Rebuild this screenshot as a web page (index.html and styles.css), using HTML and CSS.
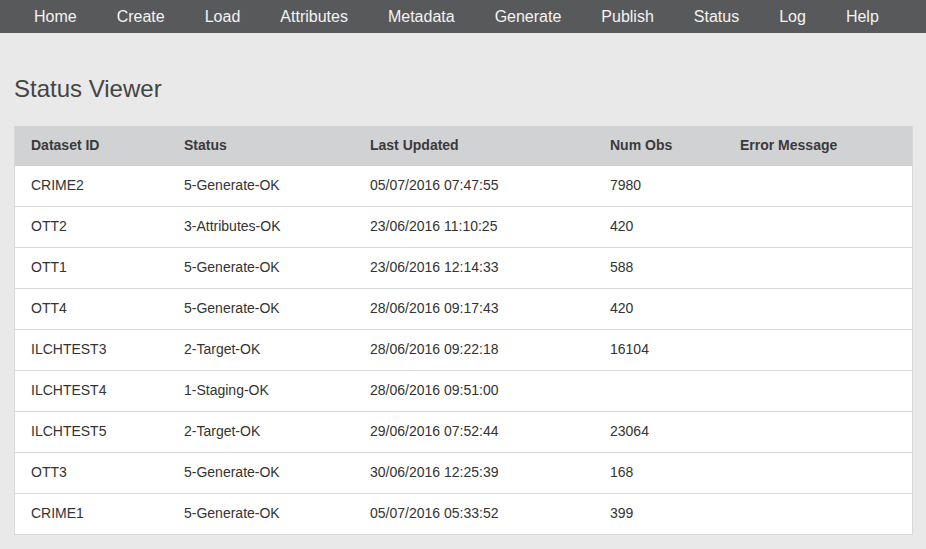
FILE: index.html
```html
<!DOCTYPE html>
<html lang="en">
<head>
    <meta charset="UTF-8">
    <title>Status Viewer</title>
    <link rel="stylesheet" href="styles.css">
</head>
<body>
    <header>
        <nav>
            <ul>
                <li><a href="#">Home</a></li>
                <li><a href="#">Create</a></li>
                <li><a href="#">Load</a></li>
                <li><a href="#">Attributes</a></li>
                <li><a href="#">Metadata</a></li>
                <li><a href="#">Generate</a></li>
                <li><a href="#">Publish</a></li>
                <li><a href="#">Status</a></li>
                <li><a href="#">Log</a></li>
                <li><a href="#">Help</a></li>
            </ul>
        </nav>
    </header>
    <section class="content">
        <h2>Status Viewer</h2>
        <table class="status-table">
            <thead>
                <tr>
                    <th class="col-id">Dataset ID</th>
                    <th class="col-status">Status</th>
                    <th class="col-date">Last Updated</th>
                    <th class="col-obs">Num Obs</th>
                    <th>Error Message</th>
                </tr>
            </thead>
            <tbody>
                <tr><td>CRIME2</td><td>5-Generate-OK</td><td>05/07/2016 07:47:55</td><td>7980</td><td></td></tr>
                <tr><td>OTT2</td><td>3-Attributes-OK</td><td>23/06/2016 11:10:25</td><td>420</td><td></td></tr>
                <tr><td>OTT1</td><td>5-Generate-OK</td><td>23/06/2016 12:14:33</td><td>588</td><td></td></tr>
                <tr><td>OTT4</td><td>5-Generate-OK</td><td>28/06/2016 09:17:43</td><td>420</td><td></td></tr>
                <tr><td>ILCHTEST3</td><td>2-Target-OK</td><td>28/06/2016 09:22:18</td><td>16104</td><td></td></tr>
                <tr><td>ILCHTEST4</td><td>1-Staging-OK</td><td>28/06/2016 09:51:00</td><td></td><td></td></tr>
                <tr><td>ILCHTEST5</td><td>2-Target-OK</td><td>29/06/2016 07:52:44</td><td>23064</td><td></td></tr>
                <tr><td>OTT3</td><td>5-Generate-OK</td><td>30/06/2016 12:25:39</td><td>168</td><td></td></tr>
                <tr><td>CRIME1</td><td>5-Generate-OK</td><td>05/07/2016 05:33:52</td><td>399</td><td></td></tr>
            </tbody>
        </table>
    </section>
</body>
</html>
```

FILE: styles.css
```css
body {
    font-family: "Liberation Sans", Arial, sans-serif;
    margin: 0;
    padding: 0;
    background-color: #e9e9e9;
    color: #333;
}
header {
    background-color: #58595b;
    height: 33px;
}
nav ul {
    margin: 0;
    padding: 0 0 0 14px;
    list-style-type: none;
    display: flex;
}
nav ul li a {
    display: block;
    padding: 0 20px;
    line-height: 33px;
    font-size: 16px;
    color: #f4f4f4;
    text-decoration: none;
}
nav ul li a:hover {
    background-color: #6a6b6d;
}
.content {
    padding: 0 13px 0 14px;
}
h2 {
    margin: 41px 0 22px;
    font-size: 24px;
    font-weight: normal;
    color: #444;
    line-height: 30px;
}
.status-table {
    width: 100%;
    border-collapse: collapse;
    background-color: white;
    font-size: 14px;
    line-height: 16px;
}
.status-table th, .status-table td {
    padding: 11px 16px 13px;
    text-align: left;
    border: 1px solid #d9d9d9;
    border-left: none;
    border-right: none;
}
.status-table tr td:first-child, .status-table tr th:first-child {
    border-left: 1px solid #d9d9d9;
}
.status-table tr td:last-child, .status-table tr th:last-child {
    border-right: 1px solid #d9d9d9;
}
.status-table th {
    background-color: #d1d2d4;
    border-color: #d1d2d4;
    font-weight: bold;
    color: #3a3a3a;
    padding-top: 10px;
    padding-bottom: 12px;
}
.col-id {
    width: 121px;
}
.col-status {
    width: 154px;
}
.col-date {
    width: 208px;
}
.col-obs {
    width: 98px;
}
```
